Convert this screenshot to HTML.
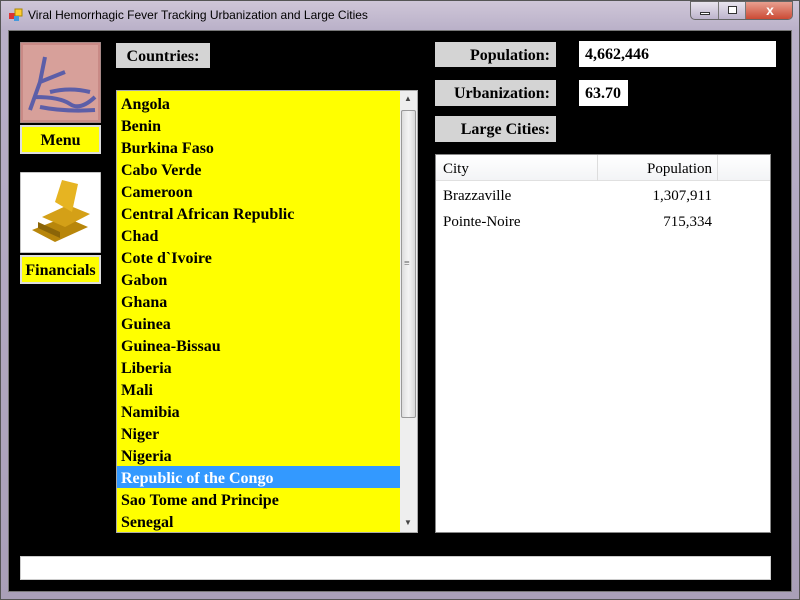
<!DOCTYPE html>
<html><head><meta charset="utf-8"><style>
*{margin:0;padding:0;box-sizing:border-box}
body{width:800px;height:600px;overflow:hidden;background:#b8aec4;font-family:"Liberation Serif",serif;position:relative}
.abs{position:absolute}
.frame{left:0;top:0;width:800px;height:600px;background:linear-gradient(#cfc6d8,#b9b0c8 30px,#a99fb8);border:1px solid #555}
.title{left:28px;top:8px;font:12px "Liberation Sans",sans-serif;color:#000}
.client{left:8px;top:30px;width:784px;height:562px;background:#000;border:1px solid #777}
.lbl{background:#d4d4d4;font-weight:bold;font-size:16px;color:#000;text-align:right;padding-right:6px;line-height:28px;height:25px}
.yel{background:#ff0;border:2px solid #ddd;font-weight:bold;font-size:16px;text-align:center}
.list{left:116px;top:90px;width:302px;height:443px;background:#ff0;border:1px solid #aaa;overflow:hidden;padding-top:1px}
.list div{height:22px;line-height:25px;font-weight:bold;font-size:16px;padding-left:4px;width:283px}
.sel{background:#3399ff;color:#fff}
.sb{left:400px;top:91px;width:17px;height:441px;background:#eee}
.thumb{left:401px;top:110px;width:15px;height:308px;background:linear-gradient(90deg,#ddd,#f4f4f4,#d8d8d8);border:1px solid #999;border-radius:2px}
.grid{left:435px;top:154px;width:336px;height:379px;background:#fff;border:1px solid #888}
.val{background:#fff;font-weight:bold;font-size:16px;line-height:27px;padding-left:6px;height:26px}
</style></head><body>
<div class="abs frame"></div>
<svg class="abs" style="left:9px;top:8px" width="14" height="14"><rect x="0" y="5" width="6" height="6" fill="#d33"/><rect x="6" y="1" width="7" height="7" fill="#fc3" stroke="#a80"/><rect x="5" y="8" width="5" height="5" fill="#49d"/></svg>
<div class="abs title">Viral Hemorrhagic Fever Tracking Urbanization and Large Cities</div>
<div class="abs" style="left:690px;top:1px;width:103px;height:19px;border:1px solid #666;border-radius:0 0 5px 5px;background:linear-gradient(#e8e4ee,#bdb4cc);overflow:hidden">
<div class="abs" style="left:0;top:0;width:28px;height:19px;border-right:1px solid #777"><div class="abs" style="left:9px;top:10px;width:10px;height:3px;background:#fff;border:1px solid #333"></div></div>
<div class="abs" style="left:28px;top:0;width:27px;height:19px;border-right:1px solid #777"><div class="abs" style="left:9px;top:4px;width:9px;height:8px;border:1px solid #333;background:#fff"></div></div>
<div class="abs" style="left:55px;top:0;width:48px;height:19px;background:linear-gradient(#e8a090,#c8402a);color:#fff;font:bold 14px 'Liberation Sans',sans-serif;text-align:center;line-height:17px">x</div>
</div>
<div class="abs client"></div>
<svg class="abs" style="left:20px;top:42px" width="81" height="81"><rect width="81" height="81" fill="#c98a86" stroke="#888"/><rect x="3" y="3" width="75" height="75" fill="#d7a09a"/><path d="M10 68 L20 40 L25 15 M20 40 L45 30 M15 55 Q40 55 50 62 T75 55 M20 65 Q45 70 75 68 M30 50 Q50 45 70 50" stroke="#5c5ea8" stroke-width="4" fill="none"/></svg>
<div class="abs yel" style="left:20px;top:125px;width:81px;height:29px;line-height:28px">Menu</div>
<svg class="abs" style="left:20px;top:172px" width="81" height="81"><rect width="81" height="81" fill="#fff" stroke="#888"/><path d="M12 58 L35 70 L68 55 L45 45Z" fill="#b8860b"/><path d="M22 45 L45 55 L70 42 L48 33Z" fill="#d4a017"/><path d="M35 30 L42 8 L58 12 L52 40Z" fill="#e6b422"/><path d="M18 50 L40 60 L40 66 L18 56Z" fill="#8b6508"/></svg>
<div class="abs yel" style="left:20px;top:255px;width:81px;height:29px;line-height:28px">Financials</div>
<div class="abs lbl" style="left:116px;top:43px;width:94px;text-align:center;padding:0">Countries:</div>
<div class="abs list">
<div>Angola</div><div>Benin</div><div>Burkina Faso</div><div>Cabo Verde</div><div>Cameroon</div><div>Central African Republic</div><div>Chad</div><div>Cote d`Ivoire</div><div>Gabon</div><div>Ghana</div><div>Guinea</div><div>Guinea-Bissau</div><div>Liberia</div><div>Mali</div><div>Namibia</div><div>Niger</div><div>Nigeria</div><div class="sel">Republic of the Congo</div><div>Sao Tome and Principe</div><div>Senegal</div>
</div>
<div class="abs sb"></div>
<div class="abs thumb"></div>
<div class="abs" style="left:404px;top:94px;font-size:8px;color:#444">▲</div>
<div class="abs" style="left:404px;top:518px;font-size:8px;color:#444">▼</div>
<div class="abs" style="left:404px;top:258px;font-size:10px;color:#555">≡</div>
<div class="abs lbl" style="left:435px;top:42px;width:121px">Population:</div>
<div class="abs lbl" style="left:435px;top:80px;width:121px;height:26px">Urbanization:</div>
<div class="abs lbl" style="left:435px;top:116px;width:121px;height:26px">Large Cities:</div>
<div class="abs val" style="left:579px;top:41px;width:197px">4,662,446</div>
<div class="abs val" style="left:579px;top:80px;width:49px">63.70</div>
<div class="abs grid">
<div class="abs" style="left:0;top:0;width:334px;height:26px;background:linear-gradient(#fff,#f3f4f6);border-bottom:1px solid #e0e0e0;font-size:15px;line-height:29px">
<span class="abs" style="left:7px">City</span><span class="abs" style="left:161px;width:1px;height:26px;background:#ddd"></span><span class="abs" style="left:162px;width:114px;text-align:right">Population</span><span class="abs" style="left:281px;width:1px;height:26px;background:#ddd"></span></div>
<div class="abs" style="left:7px;top:33px;font-size:15px">Brazzaville</div><div class="abs" style="left:175px;width:101px;text-align:right;top:33px;font-size:15px">1,307,911</div>
<div class="abs" style="left:7px;top:59px;font-size:15px">Pointe-Noire</div><div class="abs" style="left:175px;width:101px;text-align:right;top:59px;font-size:15px">715,334</div>
</div>
<div class="abs" style="left:20px;top:556px;width:751px;height:24px;background:#fff;border:1px solid #ccc"></div>
</body></html>
